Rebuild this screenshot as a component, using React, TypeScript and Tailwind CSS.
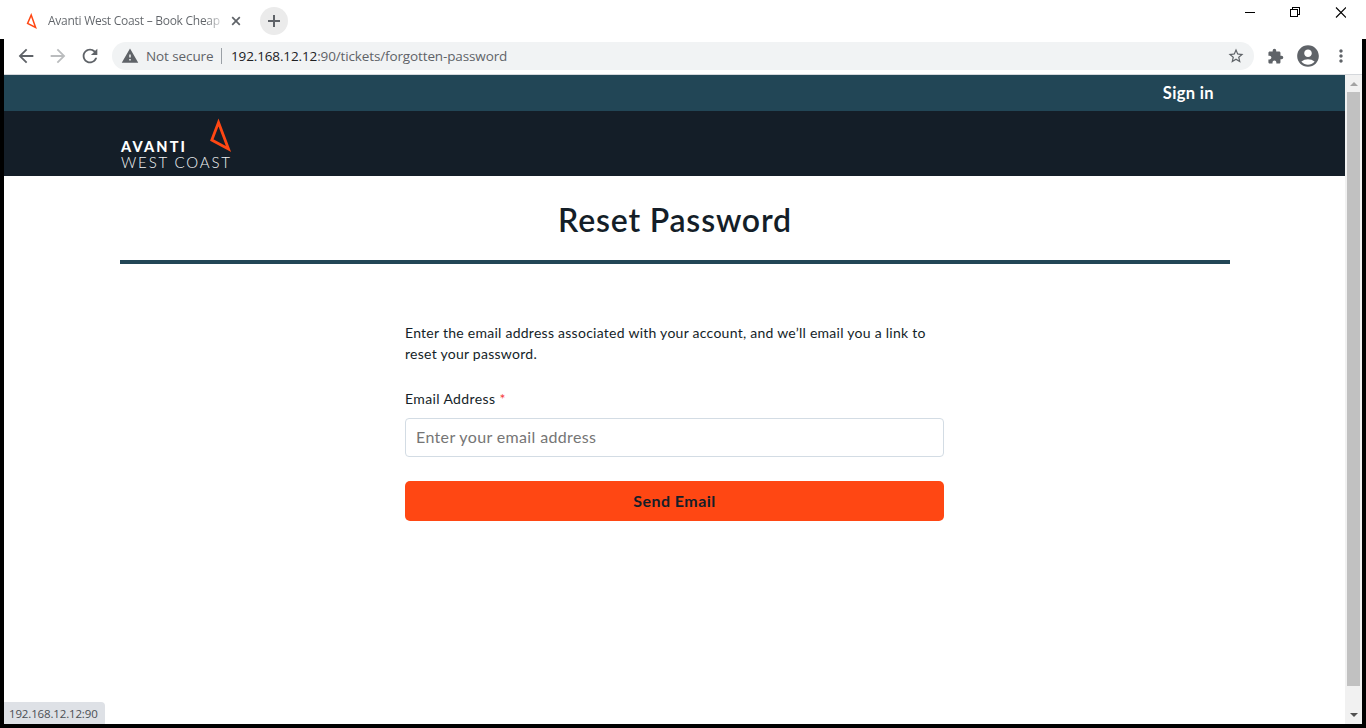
import React from "react";
import { MdArrowBack, MdArrowForward, MdRefresh, MdWarning, MdStarBorder, MdExtension, MdAccountCircle, MdMoreVert } from "react-icons/md";

function TabStrip() {
  return (
    <div className="flex h-[39px] shrink-0 items-start justify-between bg-white">
      <div className="flex items-center pt-[7px] pl-[26px]">
        <svg width="12" height="16" viewBox="0 0 12 16" fill="none" stroke="#ff4713" strokeWidth="1.5" className="shrink-0">
          <path d="M5.2 2 1.6 10.4 9.6 14.4Z" />
        </svg>
        <div className="ml-[10px] w-[174px] whitespace-nowrap bg-linear-to-r from-[#5f6368] from-90% to-[#5f6368]/20 bg-clip-text font-['Open_Sans',sans-serif] text-[12px] leading-7 tracking-[-0.27px] text-transparent">
          Avanti West Coast – Book Cheap
        </div>
        <svg width="10" height="10" viewBox="0 0 10 10" stroke="#5f6368" strokeWidth="1.7" className="ml-[9px]">
          <path d="M1.2 1.2 8.8 8.8M8.8 1.2 1.2 8.8" />
        </svg>
        <div className="ml-[19px] flex size-7 items-center justify-center rounded-full bg-[#ebebeb]">
          <svg width="12" height="12" viewBox="0 0 12 12" stroke="#5f6368" strokeWidth="2">
            <path d="M6 0V12M0 6H12" />
          </svg>
        </div>
      </div>
      <div className="flex pt-[7px] pr-5">
        <svg width="11" height="11" viewBox="0 0 11 11" stroke="#000" className="mr-[34px]" shapeRendering="crispEdges">
          <path d="M1 5.5H11" />
        </svg>
        <svg width="11" height="11" viewBox="0 0 11 11" fill="none" stroke="#000" className="mr-[35px]" shapeRendering="crispEdges">
          <path d="M1.5 2.5H8.5V9.5H1.5ZM3.5 2.5V.5H10.5V7.5H8.5" />
        </svg>
        <svg width="11" height="11" viewBox="0 0 11 11" stroke="#000" strokeWidth="1.1">
          <path d="M1 .5 11 10.5M11 .5 1 10.5" />
        </svg>
      </div>
    </div>
  );
}

function Toolbar() {
  return (
    <div className="flex h-9 shrink-0 items-start border-b border-[#d5d8dc] bg-white pt-[3px] pr-3 pl-3 font-['Open_Sans',sans-serif] text-[#5f6368]">
      <div className="flex h-7 w-24 shrink-0 items-center gap-[10px]">
        <MdArrowBack size={22} className="-ml-px" />
        <MdArrowForward size={22} className="text-[#babcbe]" />
        <MdRefresh size={22} />
      </div>
      <div className="flex h-7 w-[1142px] shrink-0 items-center rounded-full bg-[#f1f3f4] pr-[9px] pl-[9px] text-[13.5px]">
        <MdWarning size={18} />
        <span className="ml-[7px] w-[67px] whitespace-nowrap tracking-[-0.1px]">Not secure</span>
        <span className="ml-2 h-4 w-px bg-[#9aa0a6]" />
        <span className="ml-[9px] whitespace-nowrap tracking-[-0.13px]">
          <span className="text-[#202124]">192.168.12.12</span>:90/tickets/forgotten-password
        </span>
        <MdStarBorder size={18} className="ml-auto" />
      </div>
      <div className="flex h-7 items-center">
        <MdExtension size={17} className="ml-[13px]" />
        <MdAccountCircle size={26} className="ml-[11px]" />
        <MdMoreVert size={20} className="ml-[10px]" />
      </div>
    </div>
  );
}

function Logo() {
  return (
    <svg width="112" height="52" viewBox="0 0 112 52" className="font-['Lato',sans-serif]">
      <path d="M98.5 4.5 91.8 22 108.5 31Z" fill="none" stroke="#ff4713" strokeWidth="2.8" />
      <text x="1" y="33.5" fill="#fff" fontSize="14.5" fontWeight="900" textLength="64">AVANTI</text>
      <text x="1" y="49.5" fill="#f1f3f4" fontSize="15" fontWeight="300" textLength="109">WEST COAST</text>
    </svg>
  );
}

function Scrollbar() {
  return (
    <div className="flex w-[17px] shrink-0 flex-col items-center bg-[#f1f1f1]">
      <div className="flex h-[17px] items-center">
        <svg width="8" height="4" viewBox="0 0 8 4"><path d="M0 4H8L4 0Z" fill="#a3a3a3" /></svg>
      </div>
      <div className="h-[594px] w-[13px] bg-[#c1c1c1]" />
      <div className="mt-auto flex h-[17px] items-center pb-px">
        <svg width="8" height="4" viewBox="0 0 8 4"><path d="M0 0H8L4 4Z" fill="#505050" /></svg>
      </div>
    </div>
  );
}

export default function App() {
  return (
    <div className="flex h-[728px] w-[1366px] flex-col overflow-hidden bg-black">
      <TabStrip />
      <div className="mx-1 mb-1 flex min-h-0 flex-1 flex-col">
        <Toolbar />
        <div className="relative flex min-h-0 flex-1 bg-white">
          <div className="flex min-w-0 flex-1 flex-col font-['Lato',sans-serif] text-[#141e28]">
            <div className="flex h-9 shrink-0 items-center justify-end bg-[#224656] pr-[131px] text-[16.5px] font-bold text-white">
              <span className="tracking-[0.35px]">Sign in</span>
            </div>
            <header className="h-[65px] shrink-0 bg-[#141e28] pt-[7px] pl-[116px]"><Logo /></header>
            <main className="mr-[115px] ml-[116px] flex flex-col items-start">
              <h1 className="flex h-[88px] w-full items-center justify-center whitespace-nowrap border-b-4 border-[#224656] pt-[3px] text-[32px] font-semibold tracking-[0.8px]">
                Reset Password
              </h1>
              <form className="mt-[58px] ml-[285px] flex w-[539px] flex-col" onSubmit={(e) => e.preventDefault()}>
                <p className="whitespace-nowrap text-[14px] leading-[21px] tracking-[0.26px]">
                  Enter the email address associated with your account, and we’ll email you a link to
                  <br />
                  reset your password.
                </p>
                <label htmlFor="email" className="mt-6 text-[14px] leading-[21px] tracking-[0.38px]">
                  Email Address <span className="text-[#f53b3b]">*</span>
                </label>
                <input
                  id="email"
                  placeholder="Enter your email address"
                  className="mt-[9px] h-[39px] rounded border border-[#d3dce4] px-[10px] pb-[2px] text-[16px] tracking-[0.36px] placeholder:text-[#757575]"
                />
                <button className="mt-6 h-10 rounded-[5px] bg-[#ff4713] text-[16px] font-bold tracking-[0.45px]">Send Email</button>
              </form>
            </main>
          </div>
          <Scrollbar />
          <div className="absolute bottom-0 left-0 flex h-[22px] w-[101px] items-center rounded-tr bg-[#dee1e6] pt-px pl-[5px] font-['Open_Sans',sans-serif] text-[11.5px] tracking-[-0.15px] text-[#4b4f54]">
            192.168.12.12:90
          </div>
        </div>
      </div>
    </div>
  );
}
